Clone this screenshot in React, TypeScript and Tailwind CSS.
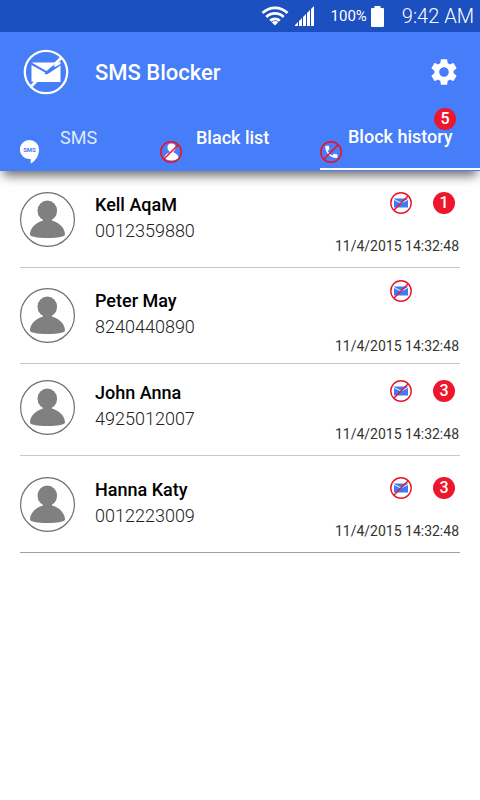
import React from "react";
import { MdSettings } from "react-icons/md";

type Entry = {
  name: string;
  phone: string;
  date: string;
  count?: number;
  row: string;
  info: string;
  side: string;
};

const entries: Entry[] = [
  { name: "Kell AqaM", phone: "0012359880", date: "11/4/2015 14:32:48", count: 1, row: "h-[97px] pt-[21px]", info: "", side: "h-16" },
  { name: "Peter May", phone: "8240440890", date: "11/4/2015 14:32:48", row: "h-24 pt-3", info: "pt-2", side: "h-[76px]" },
  { name: "John Anna", phone: "4925012007", date: "11/4/2015 14:32:48", count: 3, row: "h-[92px] pt-4", info: "", side: "h-16" },
  { name: "Hanna Katy", phone: "0012223009", date: "11/4/2015 14:32:48", count: 3, row: "h-[97px] pt-[21px]", info: "", side: "h-16" },
];

function WifiIcon() {
  return (
    <svg viewBox="0 0 28 20" className="h-5 w-7" fill="none" stroke="white" strokeWidth="2.8" aria-hidden="true">
      <path d="M1.5 7a17.7 17.7 0 0 1 25 0" />
      <path d="M5.3 11a12.3 12.3 0 0 1 17.4 0" />
      <path d="M9.2 14.8a6.8 6.8 0 0 1 9.6 0" />
      <path d="M14 19.5l-3.2-3.2a4.5 4.5 0 0 1 6.4 0z" fill="white" stroke="none" />
    </svg>
  );
}

function SignalIcon() {
  return (
    <svg viewBox="0 0 20 20" className="size-5" fill="white" aria-hidden="true">
      <path d="M0 20v-1l3-3v4zM4 20v-5l3-3v8zM8 20v-9l3-3v12zM12 20V7l3-3v16zM16 20V3l3-3v20z" />
    </svg>
  );
}

function BatteryIcon() {
  return (
    <svg viewBox="0 0 13 21" className="h-[21px] w-[13px]" fill="white" aria-hidden="true">
      <path d="M3.5 0h6v2H12q1 0 1 1v17q0 1-1 1H1q-1 0-1-1V3q0-1 1-1h2.500z" />
    </svg>
  );
}

function LogoIcon() {
  return (
    <svg viewBox="0 0 46 46" className="size-[46px]" fill="none" aria-hidden="true">
      <circle cx="23" cy="23" r="21.200" stroke="white" strokeWidth="2.300" />
      <path d="M8.500 13.500h25L23.500 22z" fill="white" />
      <path d="M8.500 16l13.500 7.500 2 2L37.500 16.500V33h-24l-5-.5z" fill="white" />
      <path d="M22 25l16-12.500" stroke="#467df8" strokeWidth="1.300" />
      <path d="M38.500 8.500L32 15M14 31.500L8 37.500" stroke="white" strokeWidth="2.800" />
      <path d="M30.500 16l7-3.500v2.500l-5.500 3z" fill="white" />
    </svg>
  );
}

function SmsIcon() {
  return (
    <svg viewBox="0 0 20 24" className="h-6 w-5" aria-hidden="true">
      <path d="M9.500 0a9.500 9.500 0 0 1 9.500 9.500c0 6.200-3.500 11.500-8.300 14v-4.600A9.500 9.500 0 1 1 9.500 0z" fill="white" />
      <text x="9.500" y="12" textAnchor="middle" fontFamily="Roboto, sans-serif" fontSize="6" fontWeight="700" fill="#467df8">
        SMS
      </text>
    </svg>
  );
}

function Ban({ color, children }: { color: string; children: React.ReactNode }) {
  return (
    <svg viewBox="0 0 22 22" className="size-[22px] shrink-0" fill="none" aria-hidden="true">
      {children}
      <circle cx="11" cy="11" r="10.200" stroke={color} strokeWidth="1.400" />
      <path d="M3.800 18.200L18.200 3.800" stroke={color} strokeWidth="1.400" />
    </svg>
  );
}

function BlockedPersonIcon() {
  return (
    <Ban color="#fb0a14">
      <circle cx="11.500" cy="6.500" r="4" fill="white" />
      <path d="M4.500 17c0-3.500 3.500-5.500 7-5.500s7 2 7 5.500c-1 1.500-4 2.500-7 2.500s-6-1-7-2.500z" fill="white" />
      <path d="M9.500 9h4v4h-4z" fill="white" />
    </Ban>
  );
}

function BlockedCallIcon() {
  return (
    <Ban color="#fb0a14">
      <g transform="translate(3.200 2.700) scale(.68)">
        <path
          d="M6.620 10.790c1.440 2.830 3.760 5.140 6.590 6.590l2.200-2.200c.27-.27.67-.36 1.020-.24 1.120.37 2.330.57 3.570.57.550 0 1 .45 1 1V20c0 .55-.45 1-1 1-9.390 0-17-7.610-17-17 0-.55.450-1 1-1h3.500c.55 0 1 .45 1 1 0 1.250.2 2.450.57 3.570.110.350.030.740-.250 1.020z"
          fill="white"
        />
      </g>
    </Ban>
  );
}

function BlockedMailIcon() {
  return (
    <Ban color="#e8122d">
      <path d="M4 6.500h14v9H4z" fill="#3f7bf7" />
      <path d="M4 7.500l7 3.500 7-3.500" stroke="white" strokeWidth="1" />
    </Ban>
  );
}

function Avatar() {
  return (
    <svg viewBox="0 0 55 55" className="size-[55px] shrink-0" aria-hidden="true">
      <circle cx="27.500" cy="27.500" r="26.900" fill="white" stroke="#6f6f6f" strokeWidth="1.200" />
      <g fill="#808080">
        <ellipse cx="27.300" cy="18.700" rx="9.800" ry="10.200" />
        <path d="M23 26h9v2.600C39.500 30.500 45 36.500 45 42.500c0 2-7 3.500-17.500 3.500S10 44.500 10 42.500c0-6 5.500-12 13-13.900z" />
      </g>
    </svg>
  );
}

function Badge({ children }: { children: React.ReactNode }) {
  return (
    <span className="flex size-[22px] items-center justify-center rounded-full bg-[#ee162d] text-base leading-4 font-medium text-white">
      {children}
    </span>
  );
}

export default function App() {
  return (
    <div className="min-h-screen bg-white font-['Roboto',sans-serif]">
      <div className="flex h-8 items-center justify-end bg-[#1c4fc0] pr-[6px] text-white">
        <WifiIcon />
        <span className="ml-[6px]">
          <SignalIcon />
        </span>
        <span className="ml-4 mr-1 text-[15px] leading-5">100%</span>
        <BatteryIcon />
        <time className="ml-[18px] text-xl font-light">9:42 AM</time>
      </div>

      <header className="relative bg-[#467df8] shadow-[0_8px_10px_-3px_rgba(0,0,0,0.55)]">
        <div className="flex h-20 items-center pl-[23px] pr-5">
          <LogoIcon />
          <h1 className="ml-[26px] flex-1 text-[22px] font-medium text-white">SMS Blocker</h1>
          <button type="button" aria-label="Settings" className="text-white">
            <MdSettings className="size-8" />
          </button>
        </div>
        <nav className="grid h-[59px] grid-cols-3 pb-px text-lg leading-4 text-white">
          <button type="button" className="flex items-start pl-5 pt-[18px] text-[#dfe9ff]">
            <span className="pt-[10px]">
              <SmsIcon />
            </span>
            <span className="ml-5">SMS</span>
          </button>
          <button type="button" className="flex items-start pt-[18px]">
            <span className="pt-[11px]">
              <BlockedPersonIcon />
            </span>
            <span className="ml-[14px] font-medium">Black list</span>
          </button>
          <button type="button" aria-current="page" className="relative flex items-start border-b-2 border-white pt-[17px]">
            <span className="pt-3">
              <BlockedCallIcon />
            </span>
            <span className="ml-[6px] font-medium whitespace-nowrap">Block history</span>
            <span className="absolute right-6 -top-1">
              <Badge>5</Badge>
            </span>
          </button>
        </nav>
      </header>

      <ul className="mx-5">
        {entries.map((e) => (
          <li key={e.name} className={`flex items-start border-b border-[#c8c8c8] last:border-[#a0a0a0] ${e.row}`}>
            <div className={`flex flex-1 ${e.info}`}>
              <Avatar />
              <div className="ml-5 text-lg leading-[26px]">
                <p className="font-medium text-black">{e.name}</p>
                <p className="font-light text-[#222]">{e.phone}</p>
              </div>
            </div>
            <div className={`flex flex-col justify-between ${e.side}`}>
              <div className="grid grid-cols-[22px_22px] justify-end gap-[21px] pr-[5px]">
                <BlockedMailIcon />
                {e.count && <Badge>{e.count}</Badge>}
              </div>
              <time className="pr-px text-right text-sm leading-5 text-[#333]">{e.date}</time>
            </div>
          </li>
        ))}
      </ul>
    </div>
  );
}
